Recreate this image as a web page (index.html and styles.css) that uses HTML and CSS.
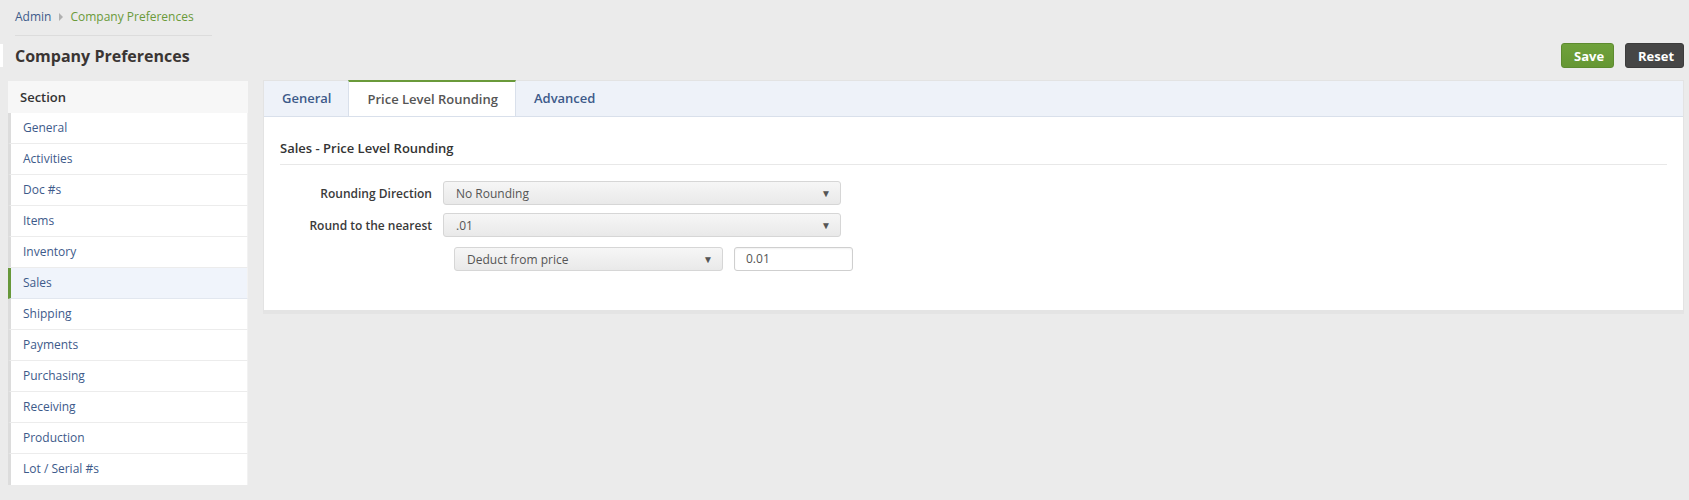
FILE: index.html
```html
<!DOCTYPE html>
<html lang="en">
<head>
<meta charset="utf-8">
<title>Company Preferences</title>
<link rel="stylesheet" href="styles.css">
</head>
<body>
  <div class="breadcrumb">
    <div class="crumbs">
      <a class="crumb-link">Admin</a>
      <span class="crumb-sep"></span>
      <span class="crumb-current">Company Preferences</span>
    </div>
  </div>

  <div class="title-row">
    <div class="title-accent"></div>
    <h1 class="page-title">Company Preferences</h1>
    <div class="actions">
      <button class="btn btn-save">Save</button>
      <button class="btn btn-reset">Reset</button>
    </div>
  </div>

  <div class="main">
    <div class="section-panel">
      <div class="section-head">Section</div>
      <ul class="section-list">
        <li class="section-item">General</li>
        <li class="section-item">Activities</li>
        <li class="section-item">Doc #s</li>
        <li class="section-item">Items</li>
        <li class="section-item">Inventory</li>
        <li class="section-item active">Sales</li>
        <li class="section-item">Shipping</li>
        <li class="section-item">Payments</li>
        <li class="section-item">Purchasing</li>
        <li class="section-item">Receiving</li>
        <li class="section-item">Production</li>
        <li class="section-item">Lot / Serial #s</li>
      </ul>
    </div>

    <div class="tab-panel">
      <div class="tab-bar">
        <div class="tab">General</div>
        <div class="tab active">Price Level Rounding</div>
        <div class="tab">Advanced</div>
      </div>
      <div class="tab-content">
        <div class="content-heading">Sales - Price Level Rounding</div>
        <div class="form">
          <div class="form-row">
            <label class="form-label">Rounding Direction</label>
            <div class="select wide"><span>No Rounding</span><span class="caret">&#9660;</span></div>
          </div>
          <div class="form-row">
            <label class="form-label">Round to the nearest</label>
            <div class="select wide"><span>.01</span><span class="caret">&#9660;</span></div>
          </div>
          <div class="form-row sub-row">
            <div class="select narrow"><span>Deduct from price</span><span class="caret">&#9660;</span></div>
            <div class="text-input">0.01</div>
          </div>
        </div>
      </div>
    </div>
  </div>
</body>
</html>
```

FILE: styles.css
```css
* { box-sizing: border-box; }

body {
  margin: 0;
  background: #ebebeb;
  font-family: "Open Sans", "Liberation Sans", sans-serif;
  color: #333;
  font-size: 12px;
}

.breadcrumb {
  padding-left: 15px;
}

.crumbs {
  display: inline-flex;
  align-items: center;
  height: 36px;
  padding: 0 18px 2px 0;
  border-bottom: 1px solid #dcdcdc;
  font-size: 12px;
}

.crumb-link { color: #3d5a8a; }

.crumb-sep {
  width: 0;
  height: 0;
  border-top: 4px solid transparent;
  border-bottom: 4px solid transparent;
  border-left: 4px solid #b0b0b0;
  margin: 0 7px 0 8px;
}

.crumb-current { color: #6a9a3a; }

.title-row {
  display: flex;
  align-items: center;
  height: 25px;
  margin-top: 7px;
  padding-right: 5px;
}

.title-accent {
  width: 3px;
  height: 23px;
  background: #fff;
}

.page-title {
  margin: 0 0 0 12px;
  font-size: 16px;
  font-weight: 700;
  color: #3a3533;
}

.actions {
  margin-left: auto;
  display: flex;
  gap: 11px;
}

.btn {
  height: 25px;
  border: none;
  border-radius: 3px;
  color: #fff;
  font-family: "Open Sans", "Liberation Sans", sans-serif;
  font-size: 13px;
  font-weight: 700;
  padding: 0 12px;
}

.btn-save {
  width: 53px;
  background: linear-gradient(#6fa23b, #659633);
  border: 1px solid #5d8b2f;
}

.btn-reset {
  width: 59px;
  background: #464646;
  border: 1px solid #3c3c3c;
}

.main {
  display: flex;
  align-items: flex-start;
  gap: 15px;
  margin-top: 12px;
  padding: 0 5px 0 8px;
}

.section-panel {
  width: 240px;
  margin-top: 1px;
  background: #fff;
}

.section-head {
  height: 32px;
  line-height: 32px;
  padding-left: 12px;
  background: #f7f7f7;
  font-size: 13px;
  font-weight: 600;
  color: #333;
}

.section-list {
  list-style: none;
  margin: 0;
  padding: 0;
}

.section-item {
  height: 31px;
  line-height: 30px;
  padding-left: 12px;
  border-left: 3px solid #dcdcdc;
  border-bottom: 1px solid #ececec;
  border-right: 1px solid #f2f2f2;
  color: #3d5a8a;
  font-size: 12px;
}

.section-item:last-child { border-bottom: none; }

.section-item.active {
  background: #f0f4fb;
  border-left-color: #67983a;
  border-bottom-color: #e2e7ef;
}

.tab-panel {
  flex: 1;
  background: #fff;
  border: 1px solid #e3e3e3;
  border-bottom: 4px solid #e4e4e4;
}

.tab-bar {
  display: flex;
  height: 36px;
  background: #eef2f9;
  border-bottom: 1px solid #d9e0eb;
}

.tab {
  padding: 0 17px 0 18px;
  line-height: 35px;
  font-size: 13px;
  font-weight: 600;
  color: #3d5a8a;
}

.tab.active {
  background: #fff;
  color: #555;
  border-top: 2px solid #6a9a3a;
  border-left: 1px solid #d9e0eb;
  border-right: 1px solid #d9e0eb;
  line-height: 35px;
  height: 36px;
  padding: 0 17px 0 18px;
  margin-top: -1px;
}

.tab-content {
  padding: 22px 16px 39px 16px;
}

.content-heading {
  font-size: 13px;
  font-weight: 600;
  line-height: 18px;
  color: #333;
  padding-bottom: 7px;
  border-bottom: 1px solid #e8e8e8;
}

.form {
  display: flex;
  flex-direction: column;
  gap: 8px;
  margin-top: 16px;
}

.form-row {
  display: flex;
  align-items: center;
  gap: 11px;
}

.sub-row {
  margin-top: 2px;
  padding-left: 174px;
}

.form-label {
  width: 152px;
  text-align: right;
  font-size: 12px;
  font-weight: 600;
  color: #3a3a3a;
}

.select {
  display: flex;
  align-items: center;
  justify-content: space-between;
  height: 24px;
  padding: 0 9px 0 12px;
  border: 1px solid #d6d6d6;
  border-radius: 3px;
  background: linear-gradient(#f6f6f6, #e9e9e9);
  color: #555;
  font-size: 12px;
}

.select.wide { width: 398px; }
.select.narrow { width: 269px; }

.caret {
  font-size: 10px;
  color: #555;
}

.text-input {
  width: 119px;
  height: 24px;
  line-height: 22px;
  padding: 0 11px;
  border: 1px solid #cfcfcf;
  border-radius: 3px;
  background: #fff;
  box-shadow: inset 0 1px 2px rgba(0,0,0,0.06);
  color: #555;
  font-size: 12px;
}
```
